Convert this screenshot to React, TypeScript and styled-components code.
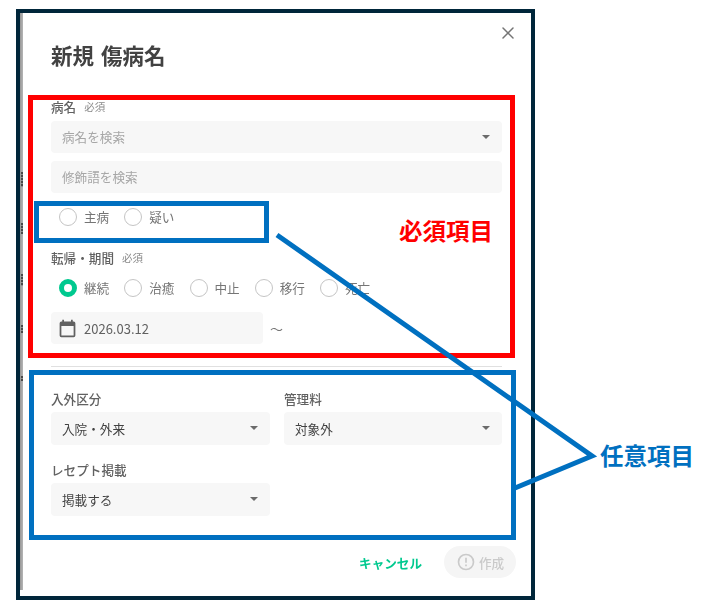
import styled, { createGlobalStyle, css } from "styled-components";
import { X } from "lucide-react";

const GlobalStyle = createGlobalStyle`
  html, body {
    margin: 0;
    padding: 0;
    background: #fff;
  }
  body {
    font-family: "Noto Sans CJK JP", "Noto Sans", sans-serif;
    color: #424242;
  }
`;

// the dialog inside the frame is a resized capture, slightly soft
const soft = css`
  filter: blur(0.3px);
`;

const Page = styled.div`
  position: relative;
  width: 705px;
  height: 605px;
  padding: 9px 0 0 16px;
  box-sizing: border-box;
  overflow: hidden;
`;

const Frame = styled.div`
  position: relative;
  width: 519px;
  height: 591px;
  box-sizing: border-box;
  border: 4px solid #00263a;
  display: flex;
  flex-direction: column;
`;

const Backdrop = styled.div`
  position: absolute;
  left: 0;
  top: 0;
  bottom: 6px;
  width: 3px;
  padding-top: 159px;
  box-sizing: border-box;
  background: linear-gradient(90deg, #979797, #b5b5b5);
  display: grid;
  grid-auto-rows: 51px;
  justify-items: end;
`;

const BackdropMark = styled.span<{ $height: number }>`
  width: 2px;
  height: ${(props) => props.$height}px;
  background: repeating-linear-gradient(#4a4a4a 0 2px, #8f8f8f 2px 3px);
  ${soft}
`;

const Header = styled.div`
  height: 82px;
  padding: 28px 0 0 31px;
  box-sizing: border-box;
  font-size: 21.5px;
  line-height: 28px;
  font-weight: 700;
  word-spacing: 2px;
  ${soft}
`;

const Close = styled.button`
  position: absolute;
  top: 10px;
  right: 13px;
  width: 20px;
  height: 20px;
  padding: 0;
  border: 0;
  background: none;
  color: #757575;
  display: flex;
  align-items: center;
  justify-content: center;
`;

const Required = styled.section`
  margin-left: 8px;
  width: 487px;
  height: 263px;
  box-sizing: border-box;
  border: 5px solid #ff0000;
  padding: 0 8px 0 18px;
  display: flex;
  flex-direction: column;
`;

const Label = styled.div<{ $top?: number }>`
  display: flex;
  align-items: center;
  gap: 8px;
  height: 18px;
  margin-top: ${(props) => props.$top ?? 0}px;
  font-size: 12.6px;
  line-height: 18px;
  font-weight: 500;
  color: #616161;
  ${soft}
`;

const Hint = styled.span`
  font-size: 10.5px;
  font-weight: 400;
  color: #8a8a8a;
`;

const Field = styled.div<{ $top?: number; $width?: number }>`
  width: ${(props) => (props.$width ? `${props.$width}px` : "auto")};
  height: 32px;
  margin-top: ${(props) => props.$top ?? 0}px;
  padding: 0 11px 1px;
  box-sizing: border-box;
  background: #f7f7f7;
  border-radius: 4px;
  display: flex;
  align-items: center;
  justify-content: space-between;
  font-size: 12.6px;
  color: #424242;
  ${soft}
`;

const Placeholder = styled.span`
  color: #a6a6a6;
`;

const Caret = styled.span`
  width: 0;
  height: 0;
  margin-right: 1px;
  border-left: 4px solid transparent;
  border-right: 4px solid transparent;
  border-top: 4px solid #6b6b6b;
`;

const MainRow = styled.div`
  width: 235px;
  height: 42px;
  margin: 8px 0 0 -17px;
  box-sizing: border-box;
  border: 5px solid #0070c0;
  padding: 0 0 10px 20px;
  display: flex;
  align-items: center;
`;

const RadioRow = styled.div`
  height: 32px;
  margin-top: 5px;
  padding-left: 8px;
  display: flex;
  align-items: center;
`;

const Radio = styled.label`
  width: 65.25px;
  flex: none;
  display: flex;
  align-items: center;
  gap: 7px;
  font-size: 12.6px;
  line-height: 17px;
  color: #757575;
  ${soft}
`;

const RadioText = styled.span`
  margin-bottom: 2px;
`;

const Circle = styled.span<{ $checked?: boolean }>`
  width: 18px;
  height: 18px;
  flex: none;
  box-sizing: border-box;
  border-radius: 50%;
  border: ${(props) =>
    props.$checked ? "5.5px solid #00c98f" : "1.5px solid #c4c4c4"};
  background: #fff;
`;

const DateRow = styled.div`
  display: flex;
  align-items: center;
  margin-top: 8px;
  gap: 7px;
`;

const DateField = styled(Field)`
  justify-content: flex-start;
  gap: 6px;
  padding: 0 0 0 6px;
  font-size: 13px;
  color: #616161;
`;

const Tilde = styled.span`
  font-size: 13px;
  color: #757575;
  ${soft}
`;

const Divider = styled.hr`
  flex: none;
  width: 451px;
  height: 1px;
  margin: 8px 0 0 31px;
  border: 0;
  background: #e0e0e0;
`;

const Optional = styled.section`
  margin: 3px 0 0 9px;
  width: 487px;
  height: 170px;
  box-sizing: border-box;
  border: 5px solid #0070c0;
  padding: 13px 9px 0 17px;
  display: grid;
  grid-template-columns: 219px 218px;
  grid-auto-rows: 57px;
  column-gap: 14px;
  row-gap: 14px;
`;

const Group = styled.div`
  display: flex;
  flex-direction: column;
  gap: 2px;
`;

const OptionLabel = styled(Label)`
  height: 22px;
  line-height: 22px;
`;

const OptionField = styled(Field)`
  height: 33px;
`;

const Footer = styled.div`
  display: flex;
  justify-content: flex-end;
  align-items: center;
  gap: 22px;
  margin-top: 6px;
  padding-right: 15px;
`;

const Cancel = styled.button`
  padding: 0;
  border: 0;
  background: none;
  font-family: inherit;
  font-size: 12.6px;
  font-weight: 700;
  color: #00c98f;
  ${soft}
`;

const Create = styled.button`
  width: 72px;
  height: 32px;
  padding: 0;
  border: 0;
  border-radius: 16px;
  background: #f5f5f5;
  font-family: inherit;
  font-size: 12.6px;
  font-weight: 500;
  color: #cacaca;
  display: flex;
  align-items: center;
  justify-content: center;
  gap: 3px;
  ${soft}
`;

const Callouts = styled.svg`
  position: absolute;
  left: 0;
  top: 0;
  pointer-events: none;
`;

const Note = styled.div<{ $color: string; $left: number; $top: number }>`
  position: absolute;
  left: ${(props) => props.$left}px;
  top: ${(props) => props.$top}px;
  font-size: 23.5px;
  line-height: 30px;
  font-weight: 700;
  color: ${(props) => props.$color};
`;

const CalendarIcon = () => (
  <svg width="21" height="21" viewBox="0 0 24 24" fill="#616161">
    <path d="M19 4h-1V2h-2v2H8V2H6v2H5a2 2 0 0 0-2 2v14a2 2 0 0 0 2 2h14a2 2 0 0 0 2-2V6a2 2 0 0 0-2-2zm0 16H5V9h14v11z" />
  </svg>
);

const AlertIcon = () => (
  <svg width="20" height="20" viewBox="0 0 24 24" fill="#cacaca">
    <path d="M11 15h2v2h-2zm0-8h2v6h-2zm1-5a10 10 0 1 0 0 20 10 10 0 0 0 0-20zm0 18a8 8 0 1 1 0-16 8 8 0 0 1 0 16z" />
  </svg>
);

const outcomes = ["継続", "治癒", "中止", "移行", "死亡"];
const behindHeights = [15, 11, 12, 8, 5];

export default function App() {
  return (
    <Page>
      <GlobalStyle />
      <Frame>
        <Backdrop>
          {behindHeights.map((height, index) => (
            <BackdropMark key={index} $height={height} />
          ))}
        </Backdrop>
        <Header>新規 傷病名</Header>
        <Close>
          <X size={20} strokeWidth={1.8} />
        </Close>
        <Required>
          <Label $top={-2}>
            病名<Hint>必須</Hint>
          </Label>
          <Field $top={5}>
            <Placeholder>病名を検索</Placeholder>
            <Caret />
          </Field>
          <Field $top={8}>
            <Placeholder>修飾語を検索</Placeholder>
          </Field>
          <MainRow>
            <Radio>
              <Circle />
              <RadioText>主病</RadioText>
            </Radio>
            <Radio>
              <Circle />
              <RadioText>疑い</RadioText>
            </Radio>
          </MainRow>
          <Label $top={6}>
            転帰・期間<Hint>必須</Hint>
          </Label>
          <RadioRow>
            {outcomes.map((name, index) => (
              <Radio key={name}>
                <Circle $checked={index === 0} />
                <RadioText>{name}</RadioText>
              </Radio>
            ))}
          </RadioRow>
          <DateRow>
            <DateField $width={212}>
              <CalendarIcon />
              2026.03.12
            </DateField>
            <Tilde>〜</Tilde>
          </DateRow>
        </Required>
        <Divider />
        <Optional>
          <Group>
            <OptionLabel>入外区分</OptionLabel>
            <OptionField>
              入院・外来
              <Caret />
            </OptionField>
          </Group>
          <Group>
            <OptionLabel>管理料</OptionLabel>
            <OptionField>
              対象外
              <Caret />
            </OptionField>
          </Group>
          <Group>
            <OptionLabel>レセプト掲載</OptionLabel>
            <OptionField>
              掲載する
              <Caret />
            </OptionField>
          </Group>
        </Optional>
        <Footer>
          <Cancel>キャンセル</Cancel>
          <Create>
            <AlertIcon />
            作成
          </Create>
        </Footer>
      </Frame>
      <Callouts width="705" height="605" viewBox="0 0 705 605">
        <polyline
          points="277,235 592,456 515,488"
          fill="none"
          stroke="#0070c0"
          strokeWidth="5"
        />
      </Callouts>
      <Note $color="#ff0000" $left={399} $top={215}>
        必須項目
      </Note>
      <Note $color="#0070c0" $left={600} $top={440}>
        任意項目
      </Note>
    </Page>
  );
}
